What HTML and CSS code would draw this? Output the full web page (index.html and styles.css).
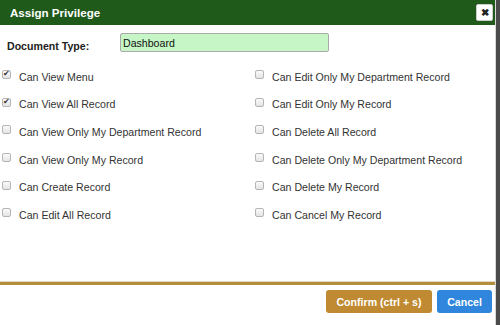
FILE: index.html
```html
<!DOCTYPE html>
<html lang="en">
<head>
    <meta charset="UTF-8">
    <title>Assign Privilege</title>
    <link rel="stylesheet" href="styles.css">
</head>
<body>
    <div class="dialog">
        <div class="dialog-header">
            <span class="dialog-title">Assign Privilege</span>
            <button class="close-btn" title="Close">&#10006;</button>
        </div>
        <div class="dialog-body">
            <div class="doc-row">
                <label for="docType">Document Type:</label>
                <input type="text" id="docType" value="Dashboard">
            </div>
            <div class="privileges">
                <label class="priv"><input type="checkbox" checked> Can View Menu</label>
                <label class="priv"><input type="checkbox"> Can Edit Only My Department Record</label>
                <label class="priv"><input type="checkbox" checked> Can View All Record</label>
                <label class="priv"><input type="checkbox"> Can Edit Only My Record</label>
                <label class="priv"><input type="checkbox"> Can View Only My Department Record</label>
                <label class="priv"><input type="checkbox"> Can Delete All Record</label>
                <label class="priv"><input type="checkbox"> Can View Only My Record</label>
                <label class="priv"><input type="checkbox"> Can Delete Only My Department Record</label>
                <label class="priv"><input type="checkbox"> Can Create Record</label>
                <label class="priv"><input type="checkbox"> Can Delete My Record</label>
                <label class="priv"><input type="checkbox"> Can Edit All Record</label>
                <label class="priv"><input type="checkbox"> Can Cancel My Record</label>
            </div>
        </div>
        <div class="dialog-footer">
            <button class="btn btn-confirm">Confirm (ctrl + s)</button>
            <button class="btn btn-cancel">Cancel</button>
        </div>
    </div>
</body>
</html>
```

FILE: styles.css
```css
body {
    font-family: "Liberation Sans", Arial, sans-serif;
    margin: 0;
    background: #4b4b4b;
    width: 500px;
    height: 325px;
    overflow: hidden;
}
.dialog {
    width: 495px;
    height: 325px;
    background: white;
    border-right: 1px solid #d8d8d8;
    display: flex;
    flex-direction: column;
}
.dialog-header {
    height: 25px;
    background: #1f5a1b;
    display: flex;
    align-items: center;
    justify-content: space-between;
    padding: 0 2px 0 10px;
}
.dialog-title {
    color: white;
    font-weight: bold;
    font-size: 11.6px;
}
.close-btn {
    width: 17px;
    height: 17px;
    padding: 0;
    border: 1px solid #ccc;
    border-radius: 2px;
    background: white;
    color: #222;
    font-size: 10px;
    line-height: 15px;
    font-weight: bold;
    cursor: pointer;
}
.dialog-body {
    flex: 1;
    padding: 0 0 0 2px;
}
.doc-row {
    display: flex;
    align-items: center;
    height: 19px;
    margin: 8px 0 0 5px;
}
.doc-row label {
    width: 113px;
    font-weight: bold;
    font-size: 10.6px;
    color: #222;
    padding-top: 6px;
}
.doc-row input {
    width: 209px;
    height: 19px;
    box-sizing: border-box;
    border: 1px solid #aaa;
    border-radius: 2px;
    background: #c6f6c5;
    font-family: inherit;
    font-size: 10.6px;
    padding: 0 2px;
    color: #111;
}
.privileges {
    display: grid;
    grid-template-columns: 253px 1fr;
    grid-auto-rows: 27.6px;
    margin-top: 11px;
}
.priv {
    display: flex;
    align-items: center;
    font-size: 10.6px;
    color: #333;
}
.priv input {
    appearance: none;
    width: 9px;
    height: 9px;
    margin: 0 8px 4px 0;
    border: 1px solid #b5b5b5;
    border-radius: 2px;
    background: linear-gradient(#fbfbfb, #e4e4e4);
    position: relative;
}
.priv input:checked::after {
    content: "\2714";
    position: absolute;
    left: 0;
    top: -2px;
    font-size: 8px;
    color: #333;
}
.dialog-footer {
    border-top: 3px solid #b28e3c;
    box-shadow: 0 -1px 0 #e2d8c0;
    height: 43px;
    flex-shrink: 0;
    display: flex;
    justify-content: flex-end;
    align-items: flex-start;
    gap: 5px;
    padding: 5px 3px 0 0;
    box-sizing: border-box;
}
.btn {
    height: 23px;
    border: none;
    border-radius: 3px;
    color: white;
    font-family: inherit;
    font-weight: bold;
    font-size: 10.6px;
    padding: 0;
    white-space: nowrap;
    cursor: pointer;
}
.btn-confirm {
    background: #bf8a31;
    width: 106px;
}
.btn-cancel {
    background: #2f86dc;
    width: 55px;
}
```
